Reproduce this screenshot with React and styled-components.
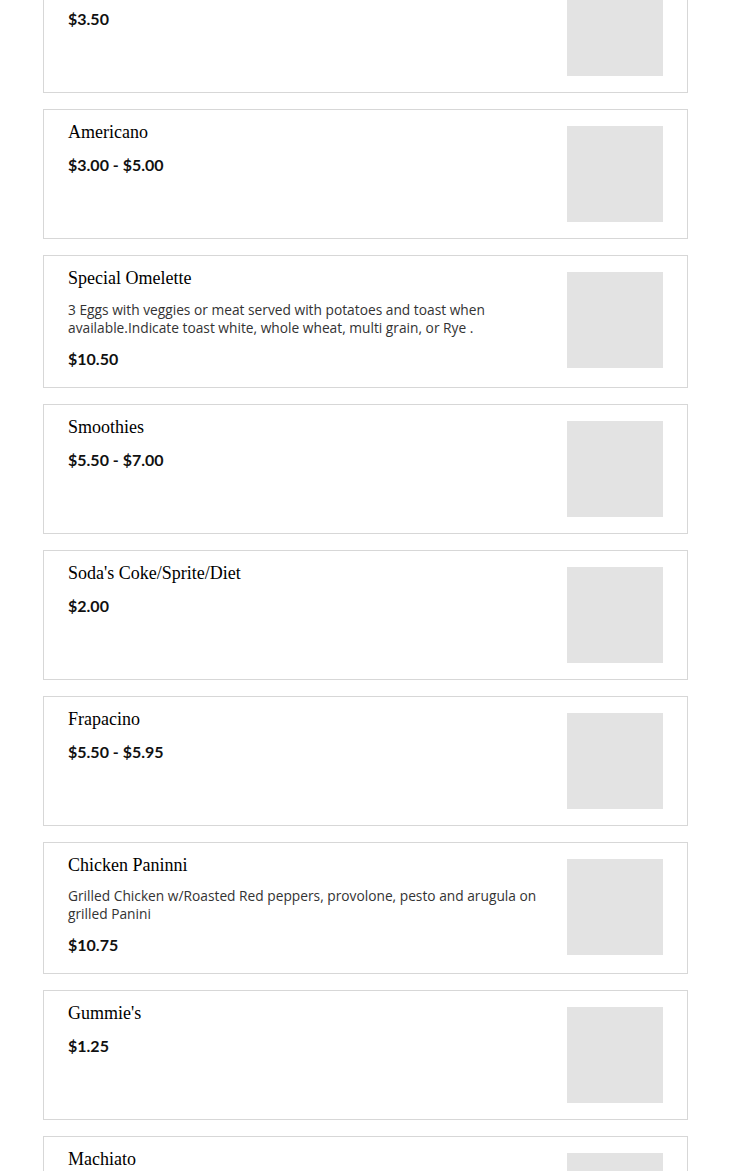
import React from "react";
import styled, { createGlobalStyle } from "styled-components";

const Global = createGlobalStyle`
  html, body { margin: 0; padding: 0; background: #ffffff; }
  body { font-family: "Lato", "Open Sans", sans-serif; color: #222; }
`;

const Page = styled.main`
  padding: 0 42px 0 43px;
  height: 1171px;
  overflow: hidden;
`;

const List = styled.ul`
  list-style: none;
  margin: -37px 0 0 0;
  padding: 0;
  display: flex;
  flex-direction: column;
  gap: 16px;
`;

const Card = styled.li`
  display: flex;
  gap: 16px;
  align-items: flex-start;
  border: 1px solid #d7d7d7;
  padding: 16px 24px;
  background: #fff;
`;

const Info = styled.div`
  flex: 1;
  min-width: 0;
  display: flex;
  flex-direction: column;
`;

const Title = styled.h3`
  margin: -4px 0 0 0;
  font-family: "Liberation Serif", "Times New Roman", serif;
  font-weight: 400;
  font-size: 18px;
  line-height: 20px;
  color: #000;
`;

const Desc = styled.p`
  margin: 12.5px 0 0 0;
  font-family: "Open Sans", "Lato", sans-serif;
  font-size: 13.75px;
  line-height: 18px;
  color: #333;
`;

const Price = styled.div`
  margin-top: ${(p) => (p.$afterDesc ? "10px" : "11px")};
  font-family: "Lato", "Open Sans", sans-serif;
  font-weight: 700;
  font-size: 16px;
  line-height: 24px;
  color: #111;
`;

const Thumb = styled.div`
  flex: 0 0 96px;
  width: 96px;
  height: 96px;
  background: #e3e3e3;
`;

const items = [
  { name: "Hot Chocolate", price: "$3.50" },
  { name: "Americano", price: "$3.00 - $5.00" },
  {
    name: "Special Omelette",
    desc: "3 Eggs with veggies or meat served with potatoes and toast when available.Indicate toast white, whole wheat, multi grain, or Rye .",
    price: "$10.50",
  },
  { name: "Smoothies", price: "$5.50 - $7.00" },
  { name: "Soda's Coke/Sprite/Diet", price: "$2.00" },
  { name: "Frapacino", price: "$5.50 - $5.95" },
  {
    name: "Chicken Paninni",
    desc: "Grilled Chicken w/Roasted Red peppers, provolone, pesto and arugula on grilled Panini",
    price: "$10.75",
  },
  { name: "Gummie's", price: "$1.25" },
  { name: "Machiato", price: "$4.00" },
];

export default function App() {
  return (
    <Page>
      <Global />
      <List>
        {items.map((it) => (
          <Card key={it.name}>
            <Info>
              <Title>{it.name}</Title>
              {it.desc && <Desc>{it.desc}</Desc>}
              <Price $afterDesc={!!it.desc}>{it.price}</Price>
            </Info>
            <Thumb />
          </Card>
        ))}
      </List>
    </Page>
  );
}
